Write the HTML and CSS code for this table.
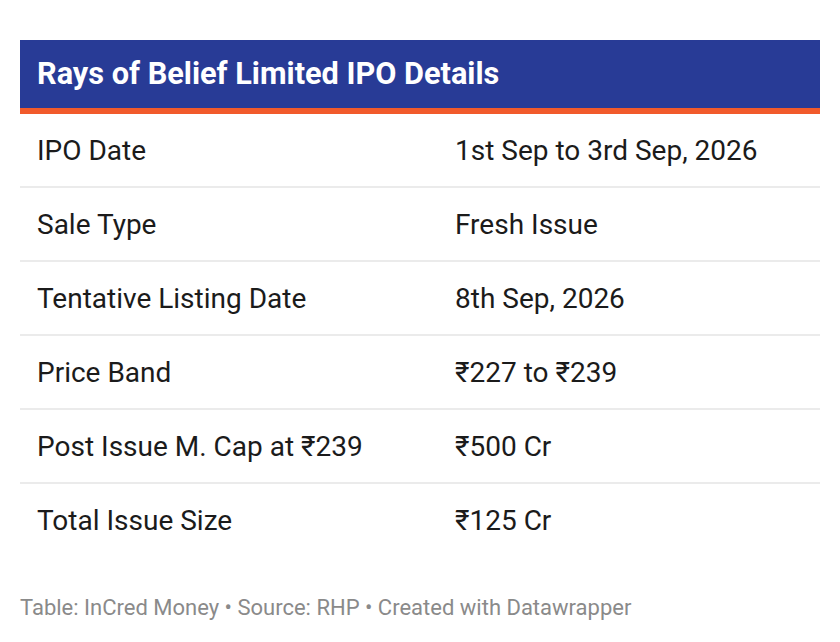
FILE: index.html
```html
<!DOCTYPE html>
<html>
<head>
<meta charset="utf-8">
<link rel="stylesheet" href="styles.css">
</head>
<body>
<div class="wrap">
  <div class="title">Rays of Belief Limited IPO Details</div>
  <table class="tbl">
    <tr><td class="k">IPO Date</td><td>1st Sep to 3rd Sep, 2026</td></tr>
    <tr><td class="k">Sale Type</td><td>Fresh Issue</td></tr>
    <tr><td class="k">Tentative Listing Date</td><td>8th Sep, 2026</td></tr>
    <tr><td class="k">Price Band</td><td>₹227 to ₹239</td></tr>
    <tr><td class="k">Post Issue M. Cap at ₹239</td><td>₹500 Cr</td></tr>
    <tr class="last"><td class="k">Total Issue Size</td><td>₹125 Cr</td></tr>
  </table>
  <div class="foot">Table: InCred Money • Source: RHP • Created with Datawrapper</div>
</div>
</body>
</html>
```
FILE: styles.css
```css
html, body { margin: 0; padding: 0; background: #fff; }
body { font-family: Roboto, "Liberation Sans", sans-serif; }
.wrap { padding: 40px 20px 0 20px; }
.title {
  background: #283b96;
  color: #fff;
  font-weight: 700;
  font-size: 30.7px;
  height: 68px;
  line-height: 68px;
  padding-left: 17px;
  border-bottom: 6px solid #f15a2b;
}
.tbl { width: 100%; border-collapse: collapse; }
.tbl td {
  height: 72px;
  padding: 0 17px;
  font-size: 28px;
  color: #1b1b1b;
  border-bottom: 2px solid #ebebeb;
  vertical-align: middle;
}
.tbl td.k { width: 384px; }
.tbl tr.last td { border-bottom: none; }
.foot {
  margin-top: 39px;
  font-size: 22px;
  color: #8a8a8a;
}
```
